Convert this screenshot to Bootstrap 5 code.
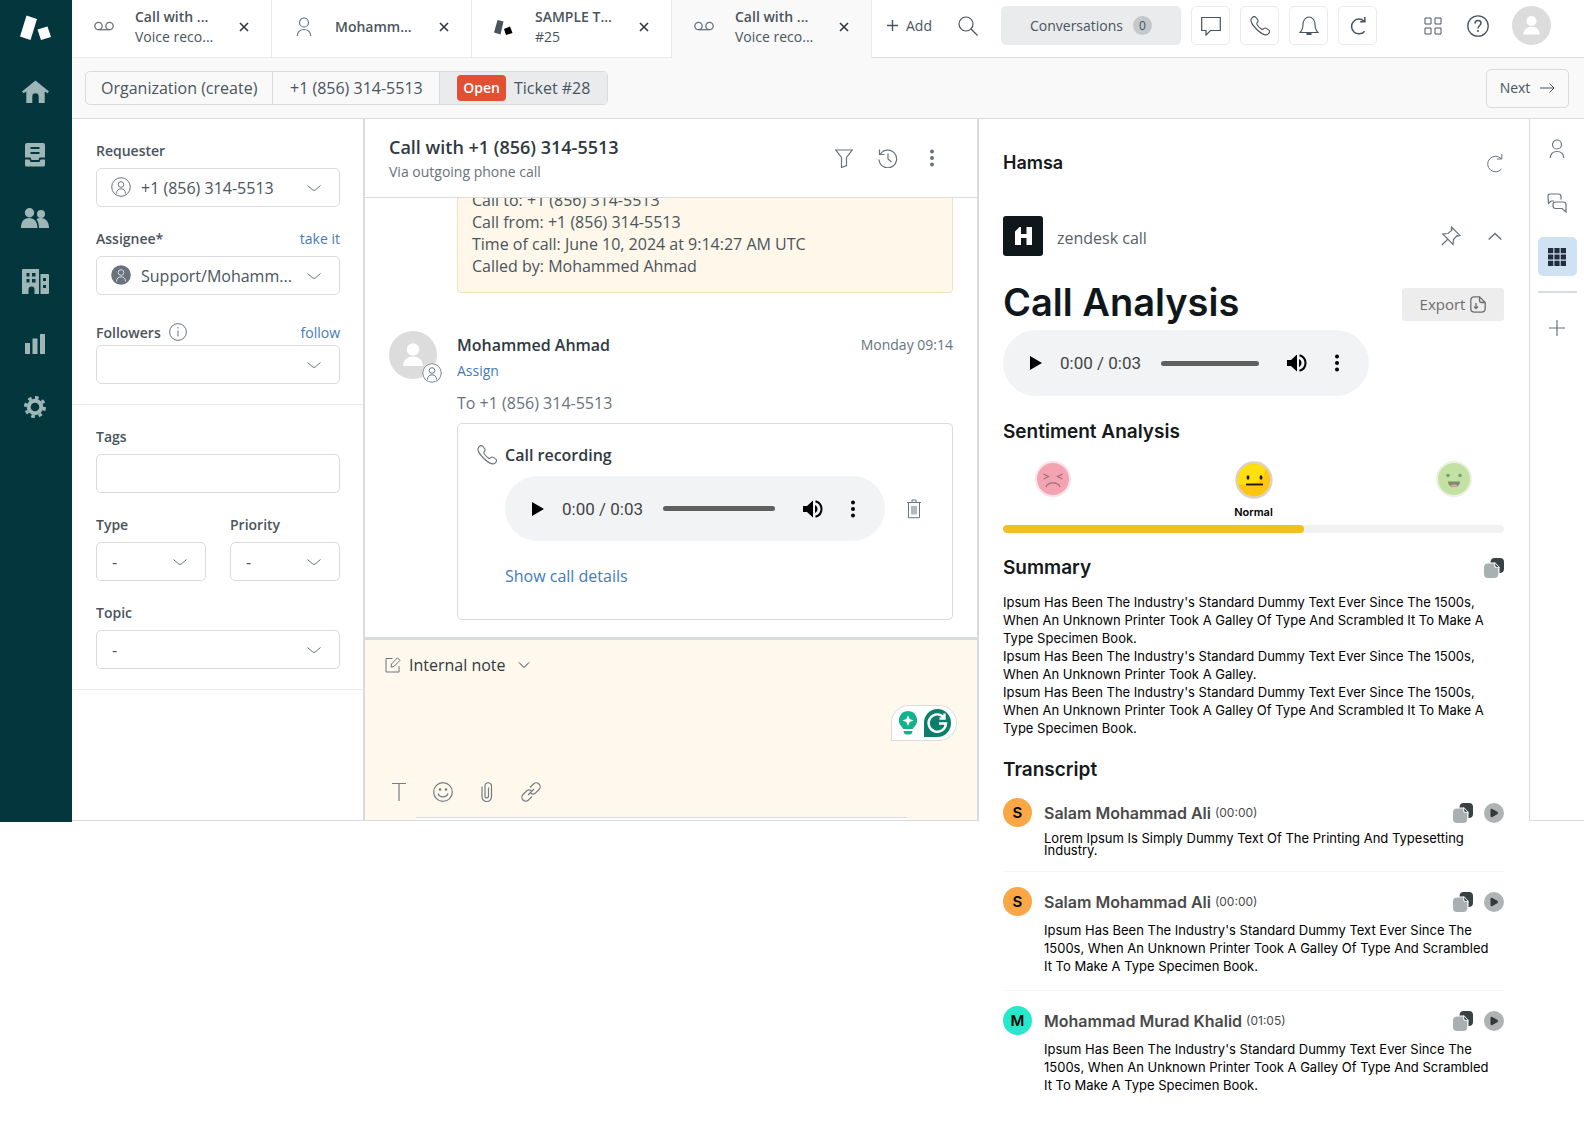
<!DOCTYPE html>
<html lang="en">
<head>
<meta charset="utf-8">
<meta name="viewport" content="width=device-width, initial-scale=1">
<title>Ticket #28</title>
<link href="https://cdn.jsdelivr.net/npm/bootstrap@5.3.0/dist/css/bootstrap.min.css" rel="stylesheet">
<style>
  :root { --line: #d8dcde; --soft: #e9ebed; --ink: #2f3941; --mute: #68737d; --blue: #3f7cba; --teal: #03363d; }
  body { font-family: "Open Sans", "Noto Sans", sans-serif; font-size: 14px; line-height: 20px; color: #49545c; background: #fff; }
  svg { display: block; flex: none; fill: none; stroke: currentColor; stroke-width: 1; }
  .solid { fill: currentColor; stroke: none; }
  a { text-decoration: none; color: var(--blue); }
  .plain { border: 0; background: none; padding: 0; color: inherit; display: flex; align-items: center; justify-content: center; }
  .semi { font-weight: 600; }
  .fluid { min-width: 0; }

  /* product rail */
  .siderail { width: 72px; min-height: 822px; background: var(--teal); color: #9fb6b8; padding: 11px 2px 0 0; }
  .siderail a { color: inherit; width: 40px; height: 34px; display: flex; align-items: center; justify-content: center; }
  .siderail nav { gap: 29px; }
  .siderail .brand { color: #fff; margin-bottom: 30px; }

  /* tab strip */
  .tabstrip { height: 58px; }
  .wtab { width: 200px; border-right: 1px solid var(--soft); border-bottom: 1px solid var(--soft); padding: 0 22px 3px 20px; line-height: 20px; }
  .wtab .glyph { width: 23px; display: flex; justify-content: center; margin-right: 20px; color: var(--mute); }
  .wtab .title { width: 84px; }
  .wtab.current { background: #f9f9f9; border-bottom-color: #f9f9f9; }
  .wtools { border-bottom: 1px solid var(--line); padding: 6px 33px 12px 15px; }
  .seek { margin-left: 26px; }
  .me { margin-left: 22px; }
  .sq { width: 39px; height: 39px; border: 1px solid var(--soft); border-radius: 5px; background: #fff; }
  .conv { width: 180px; height: 39px; background: #e9ebed; border-radius: 5px; gap: 10px; }
  .conv .count { width: 19px; height: 19px; border-radius: 50%; background: #c2c8cc; font-size: 12px; line-height: 19px; }
  .sqset { gap: 10px; margin: 0 47px 0 10px; }
  .sqset .redo { stroke-width: 1.6px; }
  .face { border-radius: 50%; background: #dcdcdc; color: #fff; overflow: hidden; }

  /* breadcrumb */
  .crumbs { height: 61px; background: #f9f9f9; border-bottom: 1px solid var(--line); padding: 0 15px 0 13px; }
  .crumbset { border: 1px solid var(--line); border-radius: 5px; height: 34px; font-size: 16px; overflow: hidden; }
  .crumbset a { color: #49545c; min-width: 167px; padding: 0 15px; display: flex; align-items: center; justify-content: center; border-right: 1px solid var(--line); }
  .crumbset a:last-child { background: #e9ebed; border-right: 0; }
  .state { background: #e34f32; color: #fff; font-size: 14px; font-weight: 600; border-radius: 4px; padding: 3px 6px; margin-right: 8px; }
  .nextbtn { width: 83px; height: 39px; border: 1px solid var(--line); border-radius: 5px; gap: 10px; }

  /* ticket fields */
  .desk { min-height: 702px; border-bottom: 1px solid var(--line); }
  .fields { width: 293px; border-right: 2px solid var(--line); }
  .fields section { padding: 22px 23px 20px 24px; border-bottom: 1px solid var(--soft); }
  .fields label { font-weight: 600; line-height: 20px; color: #49545c; }
  .lead-in { margin-bottom: 7px; }
  .fields .box { height: 39px; border: 1px solid var(--line); border-radius: 5px; font-size: 16px; color: #49545c; padding: 0 40px 0 15px; box-shadow: none; line-height: 24px;
    background-image: url("data:image/svg+xml,%3Csvg xmlns='http://www.w3.org/2000/svg' viewBox='0 0 16 16' fill='none' stroke='%2368737d'%3E%3Cpath d='M1.500 5.500 6.800 10q1.200.9 2.400 0L14.500 5.500'/%3E%3C/svg%3E"); background-position: right 17px center; background-size: 16px 16px; text-overflow: ellipsis; }
  .fields input.box { background-image: none; }
  .fields .withicon { position: relative; }
  .fields .withicon .box { padding-left: 44px; padding-right: 36px; }
  .fields .withicon svg { position: absolute; left: 15px; top: 9px; color: var(--mute); }
  .gap-a { margin-bottom: 22px; }
  .gap-b { margin-bottom: 28px; }
  .gap-c { margin-bottom: 2px; }

  /* conversation */
  .talk { border-right: 2px solid var(--line); min-width: 0; }
  .talkhead { height: 79px; border-bottom: 1px solid var(--line); padding: 15px 33px 0 24px; }
  .talkhead h1 { font-size: 18px; line-height: 26px; margin: 0; font-weight: 600; color: var(--ink); }
  .talkhead .via { color: var(--mute); line-height: 24px; }
  .talkhead .acts { gap: 20px; padding-top: 12px; }
  .talkhead .plain { width: 24px; height: 24px; color: var(--mute); }
  .stream { overflow: hidden; padding: 0 24px 17px 24px; }
  .memo { margin: -10px 0 38px 68px; border: 1px solid #f5e0bd; border-radius: 4px; background: #fff7ea; font-size: 16px; line-height: 22px; padding: 0 14px 15px; }
  .who { width: 48px; height: 48px; position: relative; margin-right: 20px; }
  .who .role { position: absolute; right: -5px; bottom: -4px; background: #fff; border-radius: 50%; color: var(--mute); }
  .author { line-height: 28px; color: var(--mute); }
  .assign { line-height: 24px; margin-bottom: 8px; }
  .big { font-size: 16px; line-height: 24px; }
  .dark { color: var(--ink); }
  .grey { color: var(--mute); }
  .reccard { border: 1px solid var(--line); border-radius: 5px; height: 197px; padding: 19px 31px 0 19px; margin-top: 8px; }
  .reccard .caption { height: 24px; margin-bottom: 9px; }
  .reccard .under { padding-left: 28px; }
  .reccard .details { padding-top: 23px; }
  .reccard .bin { margin-left: 22px; }
  .player { height: 65px; border-radius: 33px; background: #f1f3f4; color: #000; padding: 0 24px 0 27px; min-width: 0; }
  .player .clock { font-family: Roboto, sans-serif; font-size: 17px; color: #444; white-space: nowrap; margin: 0 20px 0 18px; }
  .player input { flex: 1 1 0; width: 0; min-width: 0; height: 5px; appearance: none; background: #5f5f5f; border-radius: 3px; margin: 0 28px 0 0; }
  .player input::-webkit-slider-thumb { appearance: none; width: 0; height: 0; }
  .player .sound { margin-right: 22px; }
  .player .opts { width: 16px; }
  .composer { border-top: 3px solid var(--line); background: #fff8ec; height: 183px; padding: 13px 20px 0 20px; }
  .composer .kind { font-size: 16px; color: var(--ink); line-height: 24px; gap: 8px; }
  .composer .tools { gap: 20px; padding-left: 2px; color: #747c84; }
  .composer .tools .plain { width: 24px; height: 24px; }
  .helper { width: 66px; height: 36px; border: 1px solid var(--line); border-radius: 18px 18px 18px 0; background: #fff; gap: 6px; margin-top: 28px; }
  .tray { height: 3px; background: #fff; border-top: 1px solid var(--line); margin: 13px 50px 0 31px; }

  /* app panel */
  .apps { width: 550px; padding: 31px 25px 0 24px; font-family: Inter, Lato, sans-serif; font-size: 13px; line-height: 18px; color: #000; }
  .apps h2 { font-size: 19px; line-height: 26px; font-weight: 600; margin: 0; color: #14191c; }
  .apps h1 { font-size: 38px; line-height: 46px; font-weight: 600; margin: 0; color: #0f171a; }
  .apptop { margin-bottom: 40px; padding-right: 1px; }
  .apptop h2 { font-size: 18px; }
  .approw { margin-bottom: 23px; gap: 14px; }
  .approw .fold { margin: 0 2px 0 13px; }
  .applogo { width: 40px; height: 40px; border-radius: 3px; background: #0f171a; color: #fff; }
  .appname { font-family: "Open Sans", sans-serif; font-size: 16px; line-height: 24px; color: #555f67; padding-top: 3px; }
  .apphead { margin-bottom: 5px; }
  .export { width: 102px; height: 33px; background: #ededed; border-radius: 3px; color: #6d6d6d; font-family: "Open Sans", sans-serif; font-size: 15px; gap: 5px; margin-top: 4px; }
  .apps .player { width: 366px; height: 66px; margin-bottom: 23px; }
  .moods { padding: 16px 32px 0; height: 80px; }
  .moods > div { width: 36px; display: flex; flex-direction: column; align-items: center; }
  .moods span { font-size: 11px; line-height: 14px; font-weight: 600; margin-top: 6px; }
  .apps .progress { height: 8px; border-radius: 4px; background: #f1f1f1; }
  .apps .progress-bar { background: #f2c01e; border-radius: 4px; }
  .sumhead { margin: 22px 0 12px; }
  .apps .talkinghead { margin: 20px 0 15px; }
  .turn { border-bottom: 1px solid #f6f6f6; padding: 15px 0; }
  .turn:first-of-type { padding-top: 0; }
  .turn:last-of-type { border-bottom: 0; }
  .turn .disc { width: 29px; height: 29px; border-radius: 50%; background: #fba745; font-size: 15px; line-height: 29px; font-weight: 600; text-align: center; margin-right: 12px; }
  .turn .disc.mint { background: #25e8cc; }
  .turn .name { font-size: 16px; font-weight: 600; color: #4a4a4a; }
  .turn .at { font-size: 12px; color: #4a4a4a; margin-left: 4px; }
  .turn .say { margin-left: 11px; }
  .turn .said { padding: 5px 8px 0 41px; }
  .turn .tight { line-height: 12px; }
  .dockrail { width: 55px; border-left: 1px solid var(--line); padding-top: 10px; gap: 15px; color: var(--mute); }
  .dockrail .plain { width: 39px; height: 39px; border-radius: 5px; }
  .dockrail .on { background: #cee2f2; color: #222c3c; }
  .dockrail .rule { width: 39px; height: 2px; background: var(--line); }
</style>
</head>
<body>
<svg width="0" height="0" class="position-absolute" aria-hidden="true">
  <symbol id="vm" viewBox="0 0 20 12"><g stroke-width="1.300"><circle cx="4.500" cy="5" r="3.700"/><circle cx="15.500" cy="5" r="3.700"/><path d="M4.500 8.700h11"/></g></symbol>
  <symbol id="person" viewBox="0 0 16 20"><g stroke-width="1.200"><circle cx="8" cy="5.500" r="4.500"/><path d="M1.200 19c.4-4.300 3-6.500 6.800-6.500s6.400 2.200 6.800 6.500"/></g></symbol>
  <symbol id="xx" viewBox="0 0 10 10"><path stroke="#2f3941" stroke-width="1.600" d="m1 1 8 8M9 1 1 9"/></symbol>
  <symbol id="roundp" viewBox="0 0 20 20"><circle cx="10" cy="10" r="9.300"/><circle cx="10" cy="7.500" r="2.800"/><path d="M5.500 16.500c.1-3 1.700-4.700 4.500-4.700s4.400 1.700 4.500 4.700"/></symbol>
  <symbol id="bust" viewBox="0 0 48 48"><circle class="solid" cx="24" cy="18.500" r="6.200"/><path class="solid" d="M14 35c.3-6 4-9.500 10-9.500S33.700 29 34 35z"/></symbol>
  <symbol id="phone" viewBox="0 0 20 20"><path stroke-width="1.100" d="M2 1.800C3.500.3 5 .3 6 1.500L7.800 4c.8 1.200.3 2-.8 3-.6.700-.2 1.300.7 2.500 1 1.300 2.300 2.600 3.600 3.500 1 .7 1.500.6 2.200-.1 1-1 1.900-1.300 3-.5l2.300 1.700c1.300 1 .9 2.300-.5 3.700-2 2-5.300 1.100-9.800-2.800C4.300 11.300 1.600 7.500 1 5 .7 3.700 1 2.800 2 1.800z"/></symbol>
  <symbol id="redo" viewBox="0 0 18 20"><path d="M16 5.500A7.800 7.800 0 1 0 16.500 16M16.800 1v5h-5"/></symbol>
  <symbol id="play" viewBox="0 0 12 14"><path class="solid" d="M0 0v14l12-7z"/></symbol>
  <symbol id="vol" viewBox="0 0 20 18"><path class="solid" d="M0 6v6h4l6 5.500V.5L4 6z"/><path class="solid" d="M12 5v8c1.600-.7 2.500-2.300 2.500-4S13.600 5.700 12 5z"/><path stroke-width="2" d="M12.500 1.200C16.300 2.300 18.500 5.300 18.500 9s-2.200 6.700-6 7.800"/></symbol>
  <symbol id="kebab" viewBox="0 0 6 18"><circle class="solid" cx="3" cy="2.500" r="2"/><circle class="solid" cx="3" cy="9" r="2"/><circle class="solid" cx="3" cy="15.500" r="2"/></symbol>
  <symbol id="copy" viewBox="0 0 20 20"><path fill="#3a4145" stroke="none" d="M6.500 4.500Q6.500 0 10.500 0H16q4 0 4 4v7q0 4-4.500 4V9L11 4.500z"/><path fill="#a9b0b2" stroke="none" d="M4 5.500h6.200v1.700q0 2.800 2.800 2.800h1.300v6q0 4-4 4H4q-4 0-4-4v-6.500q0-4 4-4z"/><path fill="#3a4145" stroke="#fff" stroke-width=".8" d="M10.800 4.600v3q0 1.800 1.800 1.800h2.700z"/></symbol>
  <symbol id="spin" viewBox="0 0 20 20"><circle cx="10" cy="10" r="10" fill="#b0b3b3" stroke="none"/><path fill="#33393d" stroke="none" d="M6.500 7.200q0-2 1.800-1.200l5 2.800q1.700 1.200 0 2.400l-5 2.800q-1.800.8-1.800-1.200z"/></symbol>
</svg>

<div class="d-flex align-items-start">
  <aside class="siderail flex-shrink-0 d-flex flex-column align-items-center">
    <a class="brand" href="#" aria-label="Home page"><svg width="31" height="26" viewBox="0 0 31 26"><path class="solid" d="M6.500.5 17 4 10.500 25 0 21.500zM17.500 14.500 27.500 11.500 31 22 21 25z"/></svg></a>
    <nav class="d-flex flex-column">
      <a href="#" aria-label="Home"><svg width="27" height="24" viewBox="0 0 27 24"><path class="solid" d="M13.500.5 27 11.500l-1.500 1.700-2.800-1.600V23h-6v-6.500a3.200 3.200 0 0 0-6.400 0V23h-6V11.600l-2.800 1.600L0 11.500z"/></svg></a>
      <a href="#" aria-label="Views"><svg width="20" height="24" viewBox="0 0 20 24"><path class="solid" fill-rule="evenodd" d="M2 0h16a2 2 0 0 1 2 2v12.500h-5.500L13.500 17h-7l-1-2.500H0V2a2 2 0 0 1 2-2zm3.500 4v2h9V4zm0 5v2h9V9z"/><path class="solid" d="M0 16.500h4.500l1 2.500h9l1-2.500H20V22a1.500 1.500 0 0 1-1.500 1.500h-17A1.500 1.500 0 0 1 0 22z"/></svg></a>
      <a href="#" aria-label="Customers"><svg width="28" height="20" viewBox="0 0 28 20"><path class="solid" d="M0 20c0-6.500 3-10 8-10s8.500 3.500 8.500 10zM18 20c0-4-.8-6.500-2.500-8.800 1.300-1 2.700-1.400 4.500-1.200 4.800.3 8 3.800 8 10z"/><circle class="solid" cx="8.500" cy="4.700" r="4.700"/><circle class="solid" cx="20" cy="6" r="4"/></svg></a>
      <a href="#" aria-label="Organizations"><svg width="27" height="25" viewBox="0 0 27 25"><path class="solid" fill-rule="evenodd" d="M1 0h16v25h-4.500v-4.500a3 3 0 0 0-6 0V25H0V1a1 1 0 0 1 1-1zm3.500 4v3.500h3V4zm5.500 0v3.500h3.500V4zM4.500 10v3.500h3V10zm5.500 0v3.500h3.500V10z"/><path class="solid" fill-rule="evenodd" d="M18.500 5H26a1 1 0 0 1 1 1v18a1 1 0 0 1-1 1h-7.500zm2.500 4v3h3V9zm0 7v3h3v-3z"/></svg></a>
      <a href="#" aria-label="Reporting"><svg width="20" height="20" viewBox="0 0 20 20"><path class="solid" d="M0 9h5v11H0zM7.500 4.500h5V20h-5zM15 0h5v20h-5z"/></svg></a>
      <a href="#" aria-label="Admin"><svg width="22" height="22" viewBox="0 0 22 22"><circle cx="11" cy="11" r="6.300" stroke-width="4"/><path stroke-width="3" stroke-dasharray="3.600 3.860" d="M11 1.500a9.500 9.500 0 1 1 0 19 9.500 9.500 0 1 1 0-19"/></svg></a>
    </nav>
  </aside>

  <div class="flex-grow-1 fluid">
    <header class="tabstrip d-flex">
      <div class="wtab d-flex align-items-center">
        <span class="glyph"><svg width="20" height="12"><use href="#vm"/></svg></span>
        <div class="title"><div class="semi">Call with ...</div><div>Voice reco...</div></div>
        <button class="plain ms-auto" aria-label="Close tab"><svg width="10" height="10"><use href="#xx"/></svg></button>
      </div>
      <div class="wtab d-flex align-items-center">
        <span class="glyph"><svg width="16" height="20"><use href="#person"/></svg></span>
        <div class="title semi">Mohamm...</div>
        <button class="plain ms-auto" aria-label="Close tab"><svg width="10" height="10"><use href="#xx"/></svg></button>
      </div>
      <div class="wtab d-flex align-items-center">
        <span class="glyph"><svg width="19" height="15" viewBox="0 0 19 15"><path fill="#49545c" stroke="none" d="M3.500 0 9.500 1.500 6.500 14.500 0 12.500z"/><path fill="#000" stroke="none" d="m10 9 6-2.500L18.500 13 12 15z"/></svg></span>
        <div class="title"><div class="semi">SAMPLE T...</div><div>#25</div></div>
        <button class="plain ms-auto" aria-label="Close tab"><svg width="10" height="10"><use href="#xx"/></svg></button>
      </div>
      <div class="wtab current d-flex align-items-center">
        <span class="glyph"><svg width="20" height="12"><use href="#vm"/></svg></span>
        <div class="title"><div class="semi">Call with ...</div><div>Voice reco...</div></div>
        <button class="plain ms-auto" aria-label="Close tab"><svg width="10" height="10"><use href="#xx"/></svg></button>
      </div>
      <div class="wtools d-flex align-items-center flex-grow-1">
        <button class="plain gap-2"><svg width="11" height="11" viewBox="0 0 11 11"><path stroke-width="1.400" d="M5.500 0v11M0 5.500h11"/></svg>Add</button>
        <button class="plain seek" aria-label="Search"><svg width="20" height="20" viewBox="0 0 20 20"><circle cx="8" cy="8" r="7" stroke-width="1.200"/><path stroke-width="1.200" d="m13 13 6.500 6.500"/></svg></button>
        <button class="plain conv ms-auto">Conversations <span class="count">0</span></button>
        <div class="sqset d-flex">
          <button class="plain sq" aria-label="Chat"><svg width="20" height="20" viewBox="0 0 20 20"><path stroke-width="1.200" d="M.7 1.500h18.600v13H9.500L5 19v-4.500H.7z"/></svg></button>
          <button class="plain sq" aria-label="Call"><svg width="20" height="20"><use href="#phone"/></svg></button>
          <button class="plain sq" aria-label="Notifications"><svg width="20" height="20" viewBox="0 0 20 20"><path stroke-width="1.100" d="M1 16.500c2-2 3-3.500 3-8C4 4.500 6.500 1 10 1s6 3.500 6 7.500c0 4.500 1 6 3 8z"/><path stroke-width="2" d="M7.500 18h5"/></svg></button>
          <button class="plain sq" aria-label="Refresh"><svg class="redo" width="17" height="19"><use href="#redo"/></svg></button>
        </div>
        <button class="plain" aria-label="Products"><svg width="18" height="18" viewBox="0 0 18 18"><path d="M1 1h6v6H1zM11 1h6v6h-6zM1 11h6v6H1zM11 11h6v6h-6z"/></svg></button>
        <button class="plain ms-4" aria-label="Help"><svg width="24" height="22" viewBox="-1 0 24 22"><circle cx="11" cy="11" r="10.200" stroke-width="1.300"/><path stroke-width="1.500" d="M8 8.500C8 6.500 9.300 5.500 11 5.500s3 1 3 2.700c0 2.300-3 2.300-3 5.200M11 15v2"/></svg></button>
        <button class="plain me" aria-label="Profile"><svg class="face" width="39" height="39"><use href="#bust"/></svg></button>
      </div>
    </header>

    <div class="crumbs d-flex align-items-center justify-content-between">
      <nav class="crumbset d-flex">
        <a href="#">Organization (create)</a><a href="#">+1 (856) 314-5513</a><a href="#"><span class="state">Open</span>Ticket #28</a>
      </nav>
      <button class="plain nextbtn">Next <svg width="15" height="12" viewBox="0 0 15 12"><path d="M0 6h14M9.500 1.500 14 6l-4.500 4.500"/></svg></button>
    </div>

    <div class="d-flex align-items-start">
      <div class="desk d-flex flex-grow-1 fluid">
        <form class="fields flex-shrink-0">
          <section>
            <label for="req" class="lead-in">Requester</label>
            <div class="withicon gap-a">
              <select id="req" class="form-select box"><option>+1 (856) 314-5513</option></select>
              <svg width="20" height="20"><use href="#roundp"/></svg>
            </div>
            <div class="d-flex justify-content-between lead-in"><label for="asg">Assignee*</label><a href="#">take it</a></div>
            <div class="withicon gap-b">
              <select id="asg" class="form-select box"><option>Support/Mohamm...</option></select>
              <svg width="20" height="20" viewBox="0 0 20 20"><circle class="solid" cx="10" cy="10" r="9.800"/><g stroke="#d8dcde"><circle cx="10" cy="7.500" r="2.800"/><path d="M5.500 16.500c.1-3 1.700-4.700 4.500-4.700s4.400 1.700 4.500 4.700"/></g></svg>
            </div>
            <div class="d-flex justify-content-between gap-c"><label for="fol" class="d-flex gap-2">Followers <svg width="18" height="18" viewBox="0 0 18 18" class="text-secondary"><circle cx="9" cy="9" r="8.400"/><path d="M9 7.500v6M9 4v1.500"/></svg></label><a href="#">follow</a></div>
            <select id="fol" class="form-select box"><option></option></select>
          </section>
          <section>
            <label for="tags" class="lead-in">Tags</label>
            <input id="tags" class="form-control box gap-a" type="text">
            <div class="d-flex gap-4 gap-a">
              <div class="flex-fill"><label for="typ" class="lead-in">Type</label><select id="typ" class="form-select box"><option>-</option></select></div>
              <div class="flex-fill"><label for="pri" class="lead-in">Priority</label><select id="pri" class="form-select box"><option>-</option></select></div>
            </div>
            <label for="top" class="lead-in">Topic</label>
            <select id="top" class="form-select box"><option>-</option></select>
          </section>
        </form>

        <main class="talk d-flex flex-column flex-grow-1">
          <div class="talkhead d-flex justify-content-between">
            <div><h1>Call with +1 (856) 314-5513</h1><div class="via">Via outgoing phone call</div></div>
            <div class="acts d-flex">
              <button class="plain" aria-label="Filter"><svg width="18" height="19" viewBox="0 0 18 19"><path stroke-width="1.200" d="M.8 1h16.400l-5.700 7.500v8l-5 2v-10z"/></svg></button>
              <button class="plain" aria-label="History"><svg width="20" height="20" viewBox="0 0 20 20"><path stroke-width="1.200" d="M2.500 6A8.800 8.800 0 1 1 1 11.500M1.500 1.500v5h5M10 5.500V11l3.500 3"/></svg></button>
              <button class="plain" aria-label="More"><svg width="6" height="18"><use href="#kebab"/></svg></button>
            </div>
          </div>
          <div class="stream flex-grow-1">
            <div class="memo">Call to: +1 (856) 314-5513<br>Call from: +1 (856) 314-5513<br>Time of call: June 10, 2024 at 9:14:27 AM UTC<br>Called by: Mohammed Ahmad</div>
            <div class="d-flex">
              <div class="who flex-shrink-0"><svg class="face" width="48" height="48"><use href="#bust"/></svg><svg class="role" width="20" height="20"><use href="#roundp"/></svg></div>
              <div class="flex-grow-1 fluid">
                <div class="author d-flex justify-content-between"><span class="semi dark fs-6">Mohammed Ahmad</span><span>Monday 09:14</span></div>
                <div class="assign"><a href="#">Assign</a></div>
                <div class="big grey">To +1 (856) 314-5513</div>
                <div class="reccard">
                  <div class="caption d-flex align-items-center gap-2"><svg class="grey" width="20" height="20"><use href="#phone"/></svg><span class="semi big dark">Call recording</span></div>
                  <div class="under d-flex align-items-center">
                    <div class="player d-flex align-items-center flex-grow-1">
                      <button class="plain" aria-label="Play"><svg width="12" height="14"><use href="#play"/></svg></button>
                      <span class="clock">0:00 / 0:03</span>
                      <input type="range" value="0" aria-label="Seek">
                      <button class="plain sound" aria-label="Mute"><svg width="20" height="18"><use href="#vol"/></svg></button>
                      <button class="plain opts" aria-label="Options"><svg width="6" height="18"><use href="#kebab"/></svg></button>
                    </div>
                    <button class="plain bin grey" aria-label="Delete"><svg width="14" height="20" viewBox="0 0 14 20"><path d="M0 3.500h14M5 3V1h4v2M1.500 3.500v15.200h11V3.500M5 7v8.500M7 7v8.500M9 7v8.500"/></svg></button>
                  </div>
                  <div class="under details big"><a href="#">Show call details</a></div>
                </div>
              </div>
            </div>
          </div>
          <div class="composer d-flex flex-column">
            <button class="plain kind align-self-start"><svg class="text-secondary" width="16" height="16" viewBox="0 0 16 16"><path d="M7.500 1.500H1v13.500h13V9M6 10l.5-3L12.500.8l2.500 2.500L9 9.500z"/></svg>Internal note<svg width="12" height="12" viewBox="0 0 12 12" class="ms-1"><path d="m1 3.500 5 5 5-5"/></svg></button>
            <div class="helper d-flex align-items-center justify-content-center align-self-end">
              <svg width="20" height="24" viewBox="0 0 20 24"><path fill="#12b28c" stroke="none" d="M10 0a9.300 9.300 0 0 1 6 16.200c-.8.700-1 1-1 1.800H5c0-.8-.3-1.200-1-1.800A9.300 9.300 0 0 1 10 0zM5.500 20h9q-.5 3.500-3 3.500h-3q-2.500 0-3-3.500z"/><path fill="#fff" stroke="none" d="M10 4.200 11.700 8l3.800 1.500-3.800 1.600L10 15l-1.700-3.900-3.800-1.600L8.300 8z"/></svg>
              <svg width="27" height="28" viewBox="0 0 27 28"><path fill="#0b7d6b" stroke="none" d="M13.500 0A13.500 14 0 1 1 13.500 28H0V14A13.500 14 0 0 1 13.500 0z"/><path stroke="#fff" stroke-width="2.400" d="M20 8.500A8.700 8.700 0 1 0 22 14.500h-7M20.500 4.500v5h-5"/></svg>
            </div>
            <div class="tools d-flex mt-auto">
              <button class="plain" aria-label="Text"><svg width="14" height="20" viewBox="0 0 14 20"><path stroke-width="1.200" d="M0 1.500h14M7 1.500V19"/></svg></button>
              <button class="plain" aria-label="Emoji"><svg width="20" height="20" viewBox="0 0 20 20"><circle cx="10" cy="10" r="9.300" stroke-width="1.200"/><circle class="solid" cx="7" cy="7.500" r="1.300"/><circle class="solid" cx="13" cy="7.500" r="1.300"/><path stroke-width="1.300" d="M5 11.500c1.500 4.500 8.500 4.500 10 0"/></svg></button>
              <button class="plain" aria-label="Attach"><svg width="12" height="20" viewBox="0 0 12 20"><path stroke-width="1.200" d="M1 4.500v10.300a4.500 4.500 0 0 0 9.500 0V4A3.200 3.200 0 0 0 4 4v10.500a1.800 1.800 0 0 0 3.500 0V5.500"/></svg></button>
              <button class="plain" aria-label="Link"><svg width="20" height="20" viewBox="0 0 20 20"><path stroke-width="1.200" d="m7 13 6-6M9 5.500l3.500-3.500a3.800 3.800 0 0 1 5.500 5.500L14.500 11c-1.500 1.300-3.500 1.200-5 0M11 14.500 7.500 18A3.800 3.800 0 0 1 2 12.500L5.500 9c1.500-1.300 3.500-1.200 5 0"/></svg></button>
            </div>
            <div class="tray"></div>
          </div>
        </main>
      </div>

      <aside class="apps flex-shrink-0">
        <div class="apptop d-flex justify-content-between align-items-center"><h2>Hamsa</h2><button class="plain grey" aria-label="Reload apps"><svg width="18" height="20"><use href="#redo"/></svg></button></div>
        <div class="approw d-flex align-items-center">
          <div class="applogo d-flex align-items-center justify-content-center"><svg width="17" height="18" viewBox="0 0 17 18"><path class="solid" d="M0 4.500 4.500 0H6v7h5.500V0H17v18h-5.500v-7H6v7H0z"/></svg></div>
          <span class="appname">zendesk call</span>
          <button class="plain ms-auto grey" aria-label="Pin"><svg width="20" height="20" viewBox="0 0 20 20"><path stroke-width="1.200" d="m10.500 1 8.500 8.500-2 .5-1-.5-3.500 4L12 18.500 1.800 8 7 7.500l4-3.500-.7-1zM6.500 13.500.8 19"/></svg></button>
          <button class="plain fold grey" aria-label="Collapse"><svg width="14" height="10" viewBox="0 0 14 10"><path stroke-width="1.500" d="m.7 8.500 6.300-6 6.300 6"/></svg></button>
        </div>
        <div class="apphead d-flex justify-content-between align-items-center"><h1>Call Analysis</h1><button class="plain export">Export <svg width="16" height="17" viewBox="0 0 16 17"><path stroke-width="1.300" d="M9.500.8H4.500Q.8.8.8 4.500v8q0 3.700 3.700 3.700h7q3.700 0 3.700-3.700V6.500zv3.500q0 2.200 2.200 2.200h3.500M6 7v5.500M4 10.500l2 2 2-2"/></svg></button></div>
        <div class="player d-flex align-items-center">
          <button class="plain" aria-label="Play"><svg width="12" height="14"><use href="#play"/></svg></button>
          <span class="clock">0:00 / 0:03</span>
          <input type="range" value="0" aria-label="Seek">
          <button class="plain sound" aria-label="Mute"><svg width="20" height="18"><use href="#vol"/></svg></button>
          <button class="plain opts" aria-label="Options"><svg width="6" height="18"><use href="#kebab"/></svg></button>
        </div>
        <h2>Sentiment Analysis</h2>
        <div class="moods d-flex justify-content-between">
          <div><svg width="36" height="36" viewBox="0 0 36 36"><circle cx="18" cy="18" r="17" fill="#f4a3b2" stroke="#fae3e6" stroke-width="2"/><path stroke="#9b6f78" stroke-width="1.200" d="m8.500 13 5 2.500-5 2.500M27.500 13l-5 2.500 5 2.500M11 26c2-5.500 12-5.500 14 0"/></svg></div>
          <div><svg width="38" height="38" viewBox="0 0 38 38"><circle cx="19" cy="19" r="17.500" fill="#ffc60f" stroke="#dcd3c4" stroke-width="2.500"/><path fill="#ffdf0d" stroke="none" d="M3 23A16.300 16.300 0 0 1 30 7.300C31 18 20 26 3 23z"/><ellipse cx="13" cy="16.500" rx="1.400" ry="2.300" fill="#1b1400" stroke="none"/><ellipse cx="26" cy="16.500" rx="1.400" ry="2.300" fill="#1b1400" stroke="none"/><path stroke="#1b1400" stroke-width="1.800" d="M11 23.500h17"/></svg><span>Normal</span></div>
          <div><svg width="36" height="36" viewBox="0 0 36 36"><circle cx="18" cy="18" r="17" fill="#c4e1a4" stroke="#e9f3df" stroke-width="2"/><circle cx="12" cy="14.500" r="1.700" fill="#7d9674" stroke="none"/><circle cx="24" cy="14.500" r="1.700" fill="#7d9674" stroke="none"/><path fill="#7d8a6c" stroke="none" d="M12 20.500h12c0 3.500-2.500 5.500-6 5.500s-6-2-6-5.500z"/><path fill="#efaaa4" stroke="none" d="M14.500 24.500q3.500-2 7 0-3 2.500-7 0z"/></svg></div>
        </div>
        <div class="progress" role="progressbar" aria-label="Sentiment" aria-valuenow="60" aria-valuemin="0" aria-valuemax="100"><div class="progress-bar" style="width:60%"></div></div>
        <div class="sumhead d-flex justify-content-between align-items-center"><h2>Summary</h2><button class="plain" aria-label="Copy summary"><svg width="20" height="20"><use href="#copy"/></svg></button></div>
        <p class="m-0">Ipsum Has Been The Industry's Standard Dummy Text Ever Since The 1500s, When An Unknown Printer Took A Galley Of Type And Scrambled It To Make A Type Specimen Book.</p>
        <p class="m-0">Ipsum Has Been The Industry's Standard Dummy Text Ever Since The 1500s, When An Unknown Printer Took A Galley.</p>
        <p class="m-0">Ipsum Has Been The Industry's Standard Dummy Text Ever Since The 1500s, When An Unknown Printer Took A Galley Of Type And Scrambled It To Make A Type Specimen Book.</p>
        <h2 class="talkinghead">Transcript</h2>
        <article class="turn">
          <div class="d-flex align-items-center"><span class="disc">S</span><span class="name">Salam Mohammad Ali</span><span class="at">(00:00)</span><button class="plain ms-auto" aria-label="Copy"><svg width="20" height="20"><use href="#copy"/></svg></button><button class="plain say" aria-label="Play line"><svg width="20" height="20"><use href="#spin"/></svg></button></div>
          <div class="said tight">Lorem Ipsum Is Simply Dummy Text Of The Printing And Typesetting Industry.</div>
        </article>
        <article class="turn">
          <div class="d-flex align-items-center"><span class="disc">S</span><span class="name">Salam Mohammad Ali</span><span class="at">(00:00)</span><button class="plain ms-auto" aria-label="Copy"><svg width="20" height="20"><use href="#copy"/></svg></button><button class="plain say" aria-label="Play line"><svg width="20" height="20"><use href="#spin"/></svg></button></div>
          <div class="said">Ipsum Has Been The Industry's Standard Dummy Text Ever Since The 1500s, When An Unknown Printer Took A Galley Of Type And Scrambled It To Make A Type Specimen Book.</div>
        </article>
        <article class="turn">
          <div class="d-flex align-items-center"><span class="disc mint">M</span><span class="name">Mohammad Murad Khalid</span><span class="at">(01:05)</span><button class="plain ms-auto" aria-label="Copy"><svg width="20" height="20"><use href="#copy"/></svg></button><button class="plain say" aria-label="Play line"><svg width="20" height="20"><use href="#spin"/></svg></button></div>
          <div class="said">Ipsum Has Been The Industry's Standard Dummy Text Ever Since The 1500s, When An Unknown Printer Took A Galley Of Type And Scrambled It To Make A Type Specimen Book.</div>
        </article>
      </aside>

      <div class="dockrail desk flex-shrink-0 d-flex flex-column align-items-center">
        <button class="plain" aria-label="Customer"><svg width="16" height="20"><use href="#person"/></svg></button>
        <button class="plain" aria-label="Side conversations"><svg width="20" height="20" viewBox="0 0 20 20"><path stroke-width="1.200" d="M3 1h8.500q2.500 0 2.500 2.500v3M7 8H4l-2.500 2.500L1 3.500Q1 1 3 1M8.500 9h8q2.500 0 2.500 2.500v7.500l-4-3.500H8.500Q6 15.500 6 13v-1.500Q6 9 8.500 9z"/></svg></button>
        <button class="plain on" aria-label="Apps"><svg width="18" height="18" viewBox="0 0 18 18"><path class="solid" d="M0 0h5.300v5.300H0zM6.400 0h5.200v5.300H6.400zM12.700 0H18v5.300h-5.300zM0 6.400h5.300v5.200H0zM6.400 6.400h5.200v5.200H6.400zM12.700 6.400H18v5.200h-5.300zM0 12.700h5.300V18H0zM6.400 12.700h5.200V18H6.400zM12.700 12.700H18V18h-5.300z"/></svg></button>
        <div class="rule"></div>
        <button class="plain" aria-label="Add app"><svg width="16" height="16" viewBox="0 0 16 16"><path stroke-width="1.200" d="M8 0v16M0 8h16"/></svg></button>
      </div>
    </div>
  </div>
</div>
<script src="https://cdn.jsdelivr.net/npm/bootstrap@5.3.0/dist/js/bootstrap.bundle.min.js"></script>
</body>
</html>
